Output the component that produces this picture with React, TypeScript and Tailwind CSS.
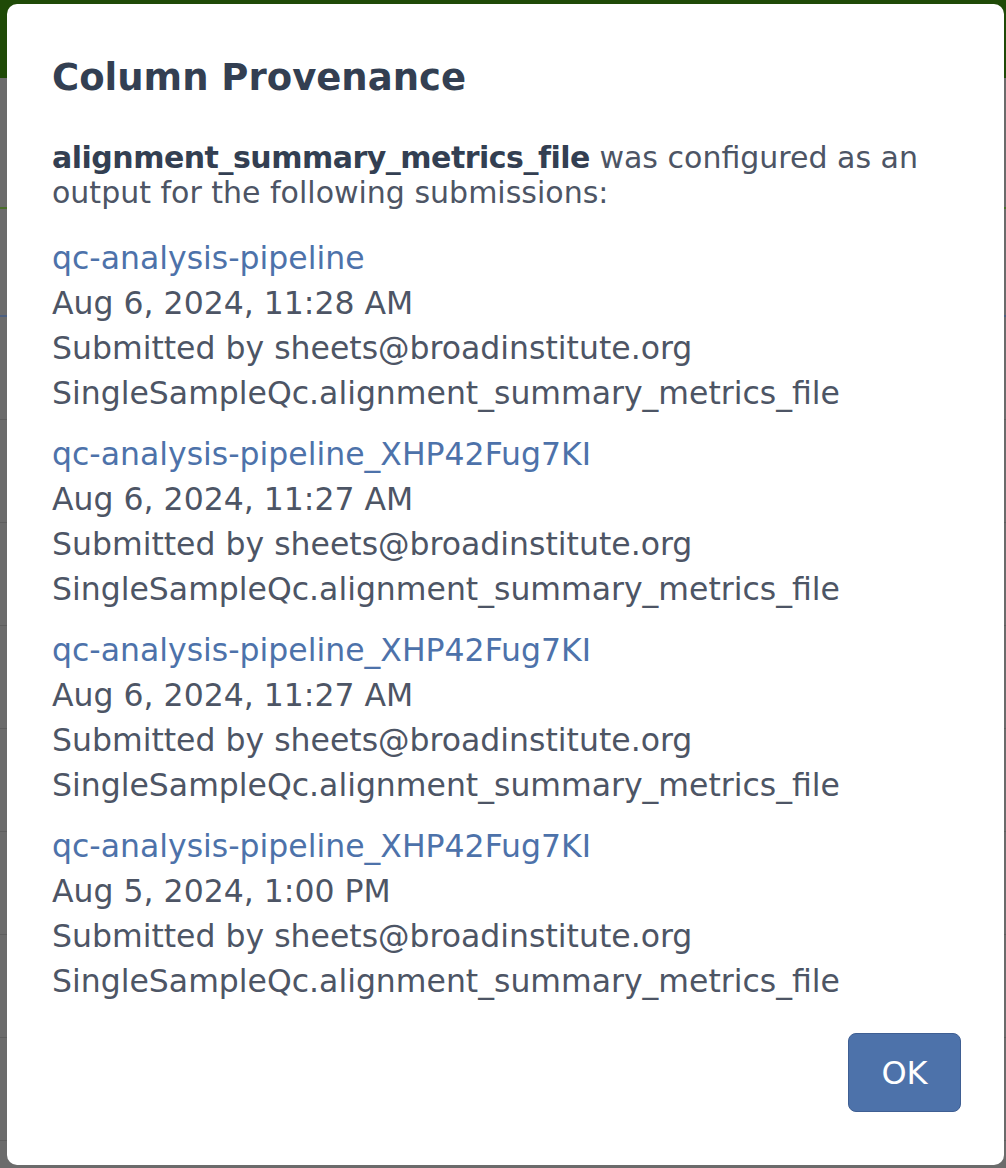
import React from "react";

type Submission = {
  name: string;
  date: string;
  user: string;
  output: string;
};

const submissions: Submission[] = [
  {
    name: "qc-analysis-pipeline",
    date: "Aug 6, 2024, 11:28 AM",
    user: "sheets@broadinstitute.org",
    output: "SingleSampleQc.alignment_summary_metrics_file",
  },
  {
    name: "qc-analysis-pipeline_XHP42Fug7KI",
    date: "Aug 6, 2024, 11:27 AM",
    user: "sheets@broadinstitute.org",
    output: "SingleSampleQc.alignment_summary_metrics_file",
  },
  {
    name: "qc-analysis-pipeline_XHP42Fug7KI",
    date: "Aug 6, 2024, 11:27 AM",
    user: "sheets@broadinstitute.org",
    output: "SingleSampleQc.alignment_summary_metrics_file",
  },
  {
    name: "qc-analysis-pipeline_XHP42Fug7KI",
    date: "Aug 5, 2024, 1:00 PM",
    user: "sheets@broadinstitute.org",
    output: "SingleSampleQc.alignment_summary_metrics_file",
  },
];

export default function App() {
  return (
    <div
      className="relative w-[1006px] h-[1168px] overflow-hidden bg-[#6b6b6b]"
      style={{ fontFamily: "'DejaVu Sans', sans-serif" }}
    >
      {/* dimmed page behind the modal */}
      <div className="h-[78px] bg-[#1f4a07]" />
      <div className="h-[131px] border-b-2 border-[#4a6e2a]" />
      <div className="h-[108px] border-b-2 border-[#4c5f80]" />
      {[0, 1, 2, 3, 4, 5, 6, 7].map((i) => (
        <div key={i} className="h-[103px] border-b border-[#5e5e5e]" />
      ))}

      {/* Modal */}
      <div className="absolute inset-0 pl-[7px] pt-[4px]">
        <div className="w-[997px] h-[1161px] bg-white rounded-[10px] pt-[52px] px-[45px] flex flex-col">
          <h1 className="text-[37px] leading-[44px] font-bold text-[#333f52]">
            Column Provenance
          </h1>

          <p className="mt-[40px] text-[30px] leading-[35px] text-[#4d5565] whitespace-nowrap">
            <span className="font-bold text-[#333f52] tracking-[-0.5px]">
              alignment_summary_metrics_file
            </span>{" "}
            was configured as an
            <br />
            output for the following submissions:
          </p>

          <div className="mt-[26px] flex flex-col gap-[16px]">
            {submissions.map((s, i) => (
              <div key={i} className="text-[31.5px] leading-[45px] text-[#4d5565] whitespace-nowrap">
                <div className="text-[#4d72aa]">{s.name}</div>
                <div>{s.date}</div>
                <div>Submitted by {s.user}</div>
                <div>{s.output}</div>
              </div>
            ))}
          </div>

          <div className="mt-[29px] flex justify-end">
            <button className="-mr-[2px] w-[113px] h-[79px] rounded-[8px] bg-[#4d72aa] border border-[#3f5f93] text-white text-[32px]">
              OK
            </button>
          </div>
        </div>
      </div>
    </div>
  );
}
